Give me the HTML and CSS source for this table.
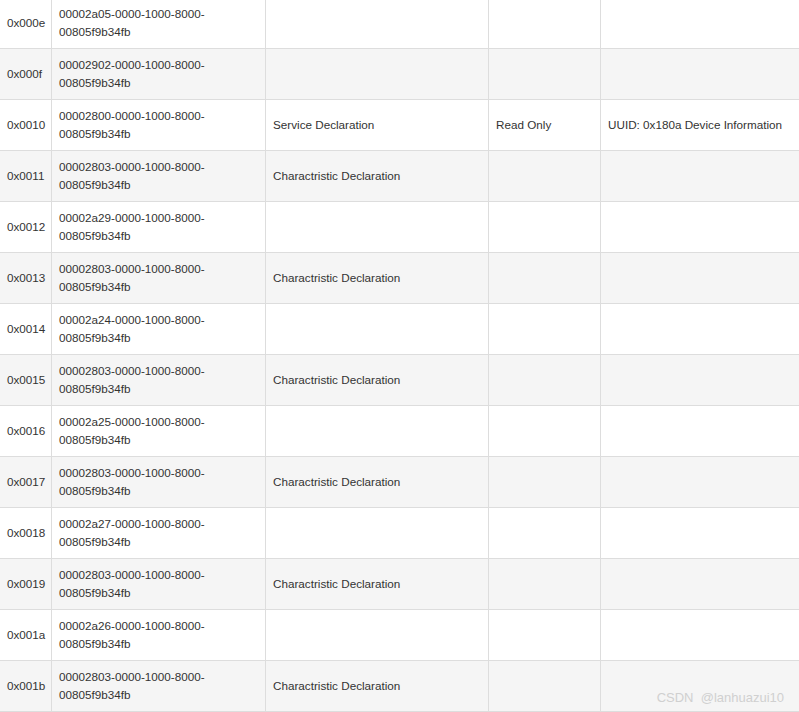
FILE: index.html
```html
<!DOCTYPE html>
<html lang="en">
<head>
  <meta charset="UTF-8">
  <meta name="viewport" content="width=device-width, initial-scale=1.0">
  <title>GATT attribute table</title>
  <link rel="stylesheet" href="styles.css">
</head>
<body>
  <div class="page">
    <table class="gatt-table">
      <colgroup>
        <col class="col-handle">
        <col class="col-uuid">
        <col class="col-type">
        <col class="col-perm">
        <col class="col-value">
      </colgroup>
      <tbody>
        <tr>
          <td>0x000e</td>
          <td>00002a05-0000-1000-8000-<wbr>00805f9b34fb</td>
          <td></td>
          <td></td>
          <td></td>
        </tr>
        <tr>
          <td>0x000f</td>
          <td>00002902-0000-1000-8000-<wbr>00805f9b34fb</td>
          <td></td>
          <td></td>
          <td></td>
        </tr>
        <tr>
          <td>0x0010</td>
          <td>00002800-0000-1000-8000-<wbr>00805f9b34fb</td>
          <td>Service Declaration</td>
          <td>Read Only</td>
          <td>UUID: 0x180a Device Information</td>
        </tr>
        <tr>
          <td>0x0011</td>
          <td>00002803-0000-1000-8000-<wbr>00805f9b34fb</td>
          <td>Charactristic Declaration</td>
          <td></td>
          <td></td>
        </tr>
        <tr>
          <td>0x0012</td>
          <td>00002a29-0000-1000-8000-<wbr>00805f9b34fb</td>
          <td></td>
          <td></td>
          <td></td>
        </tr>
        <tr>
          <td>0x0013</td>
          <td>00002803-0000-1000-8000-<wbr>00805f9b34fb</td>
          <td>Charactristic Declaration</td>
          <td></td>
          <td></td>
        </tr>
        <tr>
          <td>0x0014</td>
          <td>00002a24-0000-1000-8000-<wbr>00805f9b34fb</td>
          <td></td>
          <td></td>
          <td></td>
        </tr>
        <tr>
          <td>0x0015</td>
          <td>00002803-0000-1000-8000-<wbr>00805f9b34fb</td>
          <td>Charactristic Declaration</td>
          <td></td>
          <td></td>
        </tr>
        <tr>
          <td>0x0016</td>
          <td>00002a25-0000-1000-8000-<wbr>00805f9b34fb</td>
          <td></td>
          <td></td>
          <td></td>
        </tr>
        <tr>
          <td>0x0017</td>
          <td>00002803-0000-1000-8000-<wbr>00805f9b34fb</td>
          <td>Charactristic Declaration</td>
          <td></td>
          <td></td>
        </tr>
        <tr>
          <td>0x0018</td>
          <td>00002a27-0000-1000-8000-<wbr>00805f9b34fb</td>
          <td></td>
          <td></td>
          <td></td>
        </tr>
        <tr>
          <td>0x0019</td>
          <td>00002803-0000-1000-8000-<wbr>00805f9b34fb</td>
          <td>Charactristic Declaration</td>
          <td></td>
          <td></td>
        </tr>
        <tr>
          <td>0x001a</td>
          <td>00002a26-0000-1000-8000-<wbr>00805f9b34fb</td>
          <td></td>
          <td></td>
          <td></td>
        </tr>
        <tr>
          <td>0x001b</td>
          <td>00002803-0000-1000-8000-<wbr>00805f9b34fb</td>
          <td>Charactristic Declaration</td>
          <td></td>
          <td></td>
        </tr>
      </tbody>
    </table>
    <div class="watermark">CSDN &nbsp;@lanhuazui10</div>
  </div>
</body>
</html>
```

FILE: styles.css
```css
html, body {
  margin: 0;
  padding: 0;
  background-color: #fff;
  overflow: hidden;
}
body {
  font-family: "Liberation Sans", Arial, Helvetica, sans-serif;
  font-size: 11.7px;
  line-height: 18px;
  color: #333;
}
.page {
  position: relative;
  width: 799px;
  height: 712px;
  overflow: hidden;
}
.gatt-table {
  table-layout: fixed;
  border-collapse: collapse;
  border-spacing: 0;
  width: 801px;
  margin: -3px 0 0 -1px;
}
.col-handle {
  width: 52px;
}
.col-uuid {
  width: 214px;
}
.col-type {
  width: 223px;
}
.col-perm {
  width: 112px;
}
.col-value {
  width: 200px;
}
.gatt-table td {
  height: 36px;
  padding: 7px 8px 7px 7px;
  border: 1px solid #ddd;
  vertical-align: middle;
  text-align: left;
}
.gatt-table tr:nth-child(even) td {
  background-color: #f5f5f5;
}
.watermark {
  position: absolute;
  right: 15px;
  bottom: 6px;
  font-size: 13px;
  line-height: 16px;
  color: #d0d0d0;
}
```
